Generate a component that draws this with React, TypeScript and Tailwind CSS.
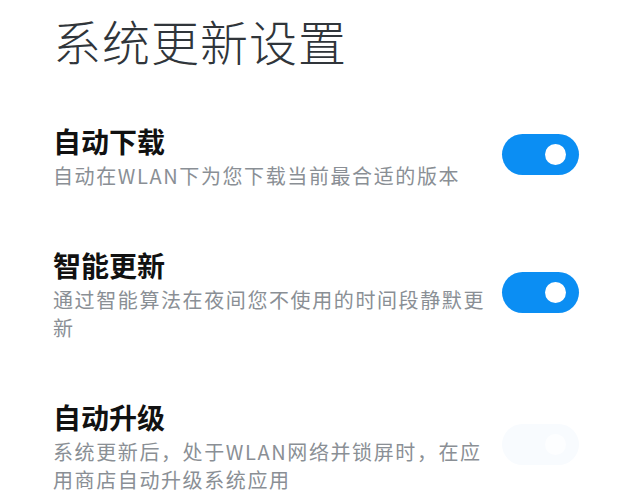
import React, { useState } from 'react';

type Item = {
  title: string;
  desc: string;
  on: boolean;
  disabled?: boolean;
};

const items: Item[] = [
  { title: '自动下载', desc: '自动在WLAN下为您下载当前最合适的版本', on: true },
  { title: '智能更新', desc: '通过智能算法在夜间您不使用的时间段静默更新', on: true },
  { title: '自动升级', desc: '系统更新后，处于WLAN网络并锁屏时，在应用商店自动升级系统应用', on: false, disabled: true },
];

function Toggle({ on, disabled, onChange }: { on: boolean; disabled?: boolean; onChange: () => void }) {
  if (disabled) {
    // greyed-out switch, barely visible on white
    return (
      <div className="w-[77px] h-[41px] mb-[8px] rounded-full bg-[#f8fbfe] shrink-0 flex items-center justify-end pr-[13px]">
        <div className="w-[21px] h-[21px] rounded-full bg-[#fdfeff]" />
      </div>
    );
  }
  return (
    <button
      onClick={onChange}
      className={
        'w-[77px] h-[41px] mb-[8px] rounded-full shrink-0 flex items-center px-[13px] transition-colors duration-150 ' +
        (on ? 'bg-[#0b8ef3] justify-end' : 'bg-[#e6e9ed] justify-start')
      }
    >
      <span className="w-[21px] h-[21px] rounded-full bg-white" />
    </button>
  );
}

export default function App() {
  const [state, setState] = useState(items.map(i => i.on));

  return (
    <div
      className="w-[629px] h-[500px] bg-white overflow-hidden pl-[53px] pr-[50px] pt-[16px]"
      style={{ fontFamily: '"Noto Sans CJK SC", "Noto Sans", sans-serif' }}
    >
      <h1 className="text-[48px] leading-[48px] font-light text-[#30353a] tracking-[1px]">系统更新设置</h1>

      <div className="mt-[63px] flex flex-col gap-[61px]">
        {items.map((item, i) => (
          <div key={item.title} className="flex items-center gap-[10px]">
            <div className="flex-1">
              <div className="text-[28px] leading-[28px] font-bold text-[#111111]">{item.title}</div>
              <p className="mt-[7px] text-[20px] leading-[28px] tracking-[1.6px] text-[#8a8f95]">{item.desc}</p>
            </div>
            <Toggle
              on={state[i]}
              disabled={item.disabled}
              onChange={() => setState(s => s.map((v, j) => (j === i ? !v : v)))}
            />
          </div>
        ))}
      </div>
    </div>
  );
}
